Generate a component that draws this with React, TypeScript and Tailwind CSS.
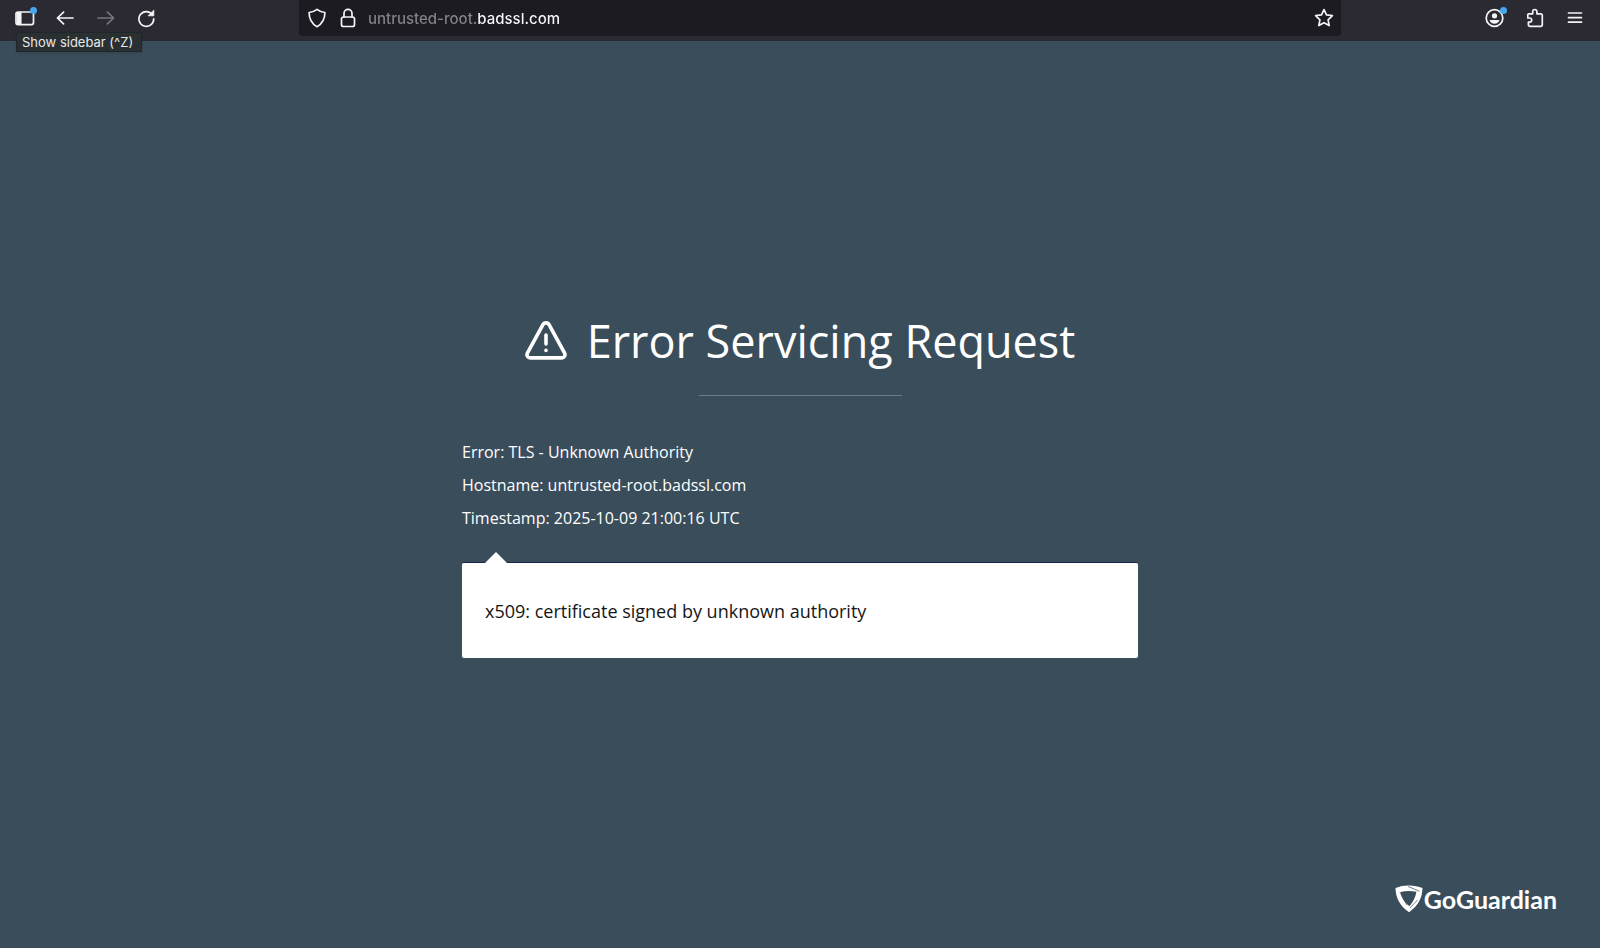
import React from 'react'

const details = [
    { label: 'Error', value: 'TLS - Unknown Authority' },
    { label: 'Hostname', value: 'untrusted-root.badssl.com' },
    { label: 'Timestamp', value: '2025-10-09 21:00:16 UTC' },
]

interface iconProps {
    children: React.ReactNode
    className?: string
}
function Icon({ children, className = 'size-5' }: iconProps) {
    return (
        <svg
            className={className}
            viewBox="0 0 20 20"
            fill="none"
            stroke="currentColor"
            strokeWidth="1.7"
            strokeLinecap="round"
            strokeLinejoin="round"
            aria-hidden="true">
            {children}
        </svg>
    )
}

interface toolButtonProps {
    label: string
    children: React.ReactNode
    disabled?: boolean
    badge?: boolean
}
function ToolButton({ label, children, disabled, badge }: toolButtonProps) {
    return (
        <button
            type="button"
            aria-label={label}
            disabled={disabled}
            className="relative flex h-9 w-10 items-center justify-center disabled:text-[#77767d]">
            {children}
            {badge && (
                <span className="absolute top-[7px] right-2 size-[7px] rounded-full bg-[#45a7f0]" />
            )}
        </button>
    )
}

function Toolbar() {
    return (
        <header className="flex h-[41px] items-start border-b border-[#252a33] bg-[#2b2a33] px-[5px] text-[#f4f4f6]">
            <div className="relative flex">
                <ToolButton label="Show sidebar" badge>
                    <Icon>
                        <rect x="1" y="4" width="17.5" height="12.6" rx="2" />
                        <path d="M2.5 4.8h3.2v11H2.5z" fill="currentColor" />
                    </Icon>
                </ToolButton>
                <ToolButton label="Back">
                    <Icon>
                        <path d="M18 10H2.6M8.6 4.2 2.4 10l6.2 5.8" />
                    </Icon>
                </ToolButton>
                <ToolButton label="Forward" disabled>
                    <Icon>
                        <path d="M3 10h15.4M12.4 4.2l6.2 5.8-6.2 5.8" />
                    </Icon>
                </ToolButton>
                <ToolButton label="Reload">
                    <Icon>
                        <path d="M17.4 6.8A7.4 7.4 0 1 0 18.7 10.8" />
                        <path
                            d="M18.8 2.4v5.4h-5.4z"
                            fill="currentColor"
                            strokeWidth="0.8"
                        />
                    </Icon>
                </ToolButton>
                <div
                    role="tooltip"
                    className="absolute top-8 left-[11px] h-5 border border-[#1f272c] bg-[#2a2f32] pr-2 pl-[5px] text-[13px] leading-[18px] whitespace-nowrap text-[#e6e8e9] shadow">
                    Show sidebar (^Z)
                </div>
            </div>

            <div className="mx-[134px] flex h-9 min-w-0 flex-1 items-center rounded-b-[4px] bg-[#1c1b22]">
                <button
                    type="button"
                    aria-label="Tracking protection"
                    className="ml-2 flex w-5 justify-center">
                    <Icon>
                        <path d="M10 1.4c2.2 1.8 4.8 2.8 7.9 3.1 0 6-1.7 10.7-7.9 14.2C3.8 15.2 2.1 10.5 2.1 4.5 5.2 4.2 7.8 3.2 10 1.4z" />
                    </Icon>
                </button>
                <button
                    type="button"
                    aria-label="Connection security"
                    className="ml-[11px] flex w-5 justify-center">
                    <Icon>
                        <rect x="3.5" y="9" width="13" height="9.5" rx="2" />
                        <path d="M6 9V5.4a4 4 0 0 1 8 0V9" />
                    </Icon>
                </button>
                <input
                    type="text"
                    aria-label="Address"
                    defaultValue="untrusted-root.badssl.com"
                    className="ml-[10px] min-w-0 flex-1 bg-[linear-gradient(90deg,#84838b_110px,#fbfbfe_110px)] bg-clip-text pt-[2px] text-[15px] font-medium text-transparent outline-none"
                />
                <button
                    type="button"
                    aria-label="Bookmark this page"
                    className="mr-[7px] flex w-5 justify-center">
                    <Icon>
                        <path d="M10 1.6l2.5 5.3 5.9.8-4.3 4.1 1.1 5.8-5.2-2.9-5.2 2.9 1.1-5.8-4.3-4.1 5.9-.8z" />
                    </Icon>
                </button>
            </div>

            <div className="flex">
                <ToolButton label="Account" badge>
                    <Icon>
                        <circle cx="9.5" cy="10" r="8.3" />
                        <circle
                            cx="9.5"
                            cy="7.8"
                            r="2.6"
                            fill="currentColor"
                            stroke="none"
                        />
                        <path
                            d="M4.5 12h10c-.6 2.4-2.5 3.8-5 3.8S5.1 14.4 4.5 12z"
                            fill="currentColor"
                            stroke="none"
                        />
                    </Icon>
                </ToolButton>
                <ToolButton label="Extensions">
                    <Icon>
                        <path d="M3.5 5.8h4.2V3.6a2.1 2.1 0 0 1 4.2 0v2.2h3.8a1.6 1.6 0 0 1 1.6 1.6v9.4a1.6 1.6 0 0 1-1.6 1.6H5a1.6 1.6 0 0 1-1.6-1.6v-2.6h1.2a2 2 0 0 0 0-4.2H2.8V6.6z" />
                    </Icon>
                </ToolButton>
                <ToolButton label="Open menu">
                    <Icon>
                        <path d="M3.5 5h13M3.5 9.6h13M3.5 14.2h13" />
                    </Icon>
                </ToolButton>
            </div>
        </header>
    )
}

function Logo() {
    return (
        <a href="#" className="flex items-center gap-px text-white">
            <svg
                className="size-7"
                viewBox="0 0 28 28"
                fill="none"
                aria-hidden="true">
                <path
                    fillRule="evenodd"
                    fill="currentColor"
                    d="M.5 3C5 1 9.5.3 14 .4c5 .1 9.5 1 13.500 2.600-.2 10-4.500 18-13.500 24.200C5 21 .7 13 .5 3zM5.500 7c.8 5.500 3.600 10 8.900 14.200 4-4.400 6.200-9.200 7-14.400C15.800 5.600 10.800 5.700 5.500 7z"
                />
                <path
                    d="M13 1.500l11.500 4.700M5 7.200l7 13M22.500 15l-7.500 8"
                    stroke="#3a4d5b"
                    strokeWidth="0.7"
                />
            </svg>
            <span className="font-['Lato'] text-[25px] leading-8 font-bold">
                GoGuardian
            </span>
        </a>
    )
}

export default function App() {
    return (
        <div className="flex min-h-screen flex-col bg-[#3a4d5b] font-['Inter',sans-serif]">
            <Toolbar />
            <main className="mx-auto w-full max-w-[676px] flex-1 pt-[268px] font-['Open_Sans',sans-serif] text-white">
                <div className="flex items-center justify-center gap-5">
                    <svg
                        className="size-[42px] shrink-0"
                        viewBox="0 0 42 42"
                        fill="none"
                        stroke="currentColor"
                        strokeWidth="3.6"
                        strokeLinecap="round"
                        strokeLinejoin="round"
                        aria-hidden="true">
                        <path d="M17.8 4.8 2.4 33.2a3.2 3.2 0 0 0 2.8 4.7h31.6a3.2 3.2 0 0 0 2.8-4.7L24.2 4.8a3.6 3.6 0 0 0-6.4 0z" />
                        <path d="M21 15v9M21 30.3v.2" />
                    </svg>
                    <h1 className="text-[45px] leading-[64px] whitespace-nowrap">
                        Error Servicing Request
                    </h1>
                </div>
                <hr className="mx-auto mt-[22px] w-[203px] border-t border-[#6f7c8c]" />
                <div className="mt-10 text-[16px] leading-[33px]">
                    {details.map((item) => (
                        <p key={item.label}>
                            {item.label}: {item.value}
                        </p>
                    ))}
                </div>
                <div className="relative mt-[27px] rounded-[2px] border-t border-[#10294a] bg-white px-[23px] pt-[33px] pb-[31px] text-[18px] leading-[31px] text-[#161616]">
                    <svg
                        className="absolute -top-[12px] left-[23px] h-3 w-[22px]"
                        viewBox="0 0 22 12"
                        aria-hidden="true">
                        <path d="M0 12 11 1l11 11z" fill="#fff" />
                    </svg>
                    <p>x509: certificate signed by unknown authority</p>
                </div>
            </main>
            <footer className="flex justify-end pr-[43px] pb-[33px]">
                <Logo />
            </footer>
        </div>
    )
}
